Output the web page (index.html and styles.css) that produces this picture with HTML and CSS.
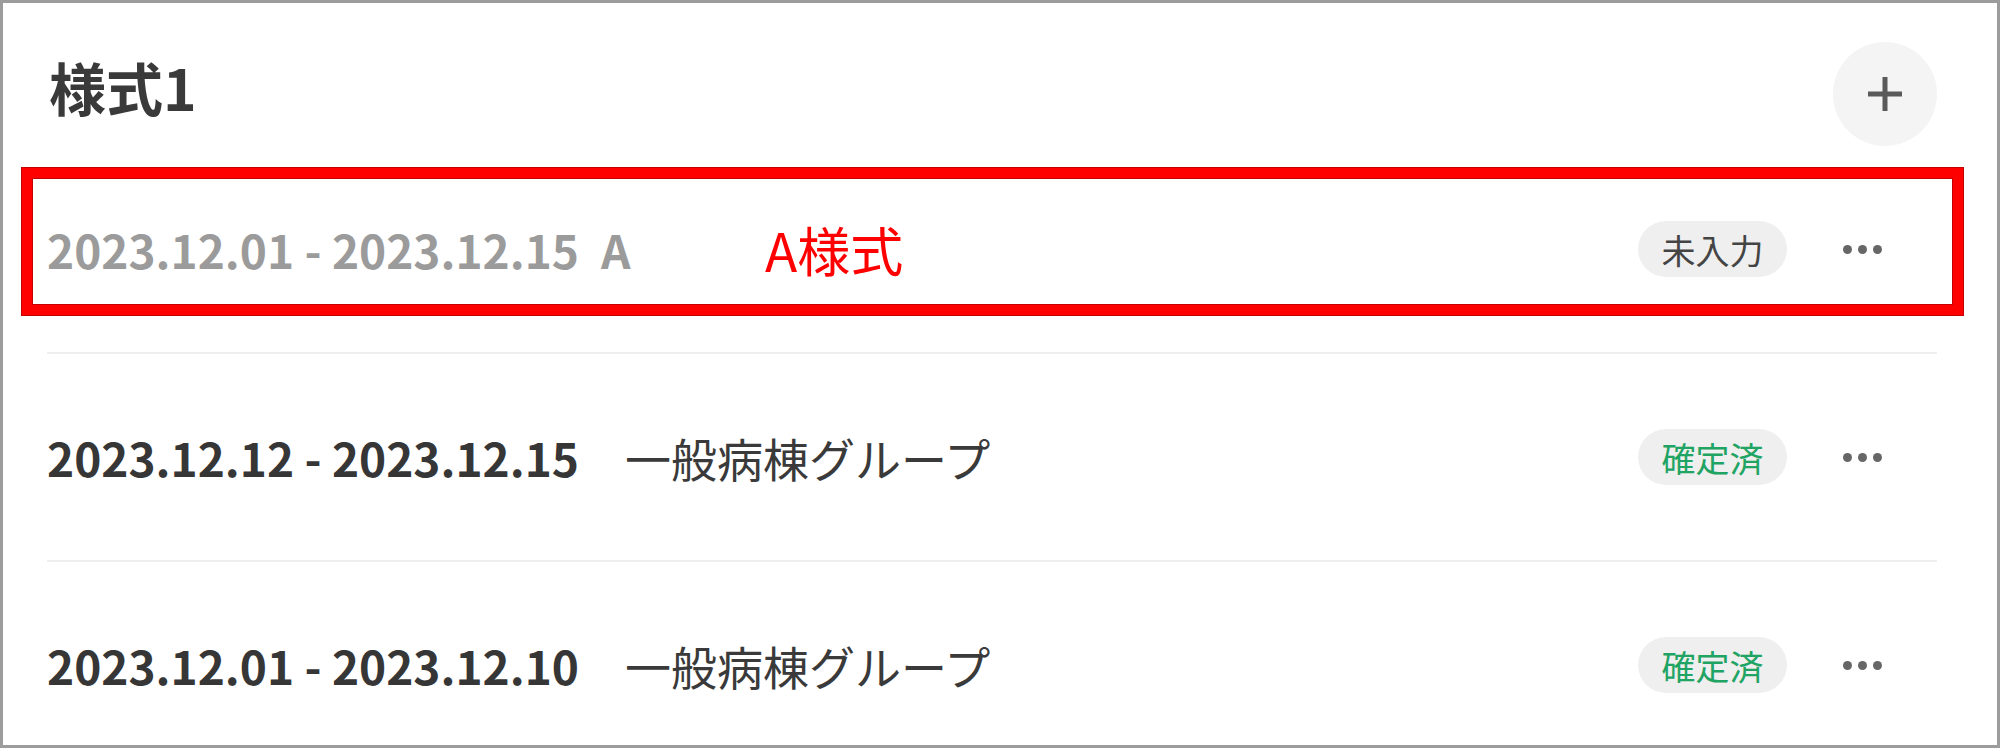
FILE: index.html
```html
<!DOCTYPE html>
<html lang="ja">
<head>
<meta charset="utf-8">
<title>様式1</title>
<link rel="stylesheet" href="styles.css">
</head>
<body>
<div class="frame">
  <section class="panel">
    <header class="panel-head">
      <h1 class="panel-title">様式1</h1>
      <button class="add-btn" aria-label="追加">
        <svg width="36" height="36" viewBox="0 0 36 36"><path d="M18 1v34M1 18h34" stroke="#5a5a5a" stroke-width="5" fill="none"/></svg>
      </button>
    </header>
    <ul class="list">
      <li class="row row-draft">
        <span class="period">2023.12.01 - 2023.12.15</span>
        <span class="name name-draft">A</span>
        <span class="spacer"></span>
        <span class="badge">未入力</span>
        <button class="menu-btn" aria-label="メニュー"><i></i><i></i><i></i></button>
      </li>
      <li class="row">
        <span class="period">2023.12.12 - 2023.12.15</span>
        <span class="name">一般病棟グループ</span>
        <span class="spacer"></span>
        <span class="badge badge-done">確定済</span>
        <button class="menu-btn" aria-label="メニュー"><i></i><i></i><i></i></button>
      </li>
      <li class="row">
        <span class="period">2023.12.01 - 2023.12.10</span>
        <span class="name">一般病棟グループ</span>
        <span class="spacer"></span>
        <span class="badge badge-done">確定済</span>
        <button class="menu-btn" aria-label="メニュー"><i></i><i></i><i></i></button>
      </li>
    </ul>
  </section>
  <div class="annot-box"></div>
  <div class="annot-text">A様式</div>
</div>
</body>
</html>
```

FILE: styles.css
```css
html, body {
  margin: 0;
  padding: 0;
  background: #ffffff;
}
body {
  font-family: "Noto Sans CJK JP", "Noto Sans", sans-serif;
  color: #333333;
}
.frame {
  position: relative;
  box-sizing: border-box;
  width: 2000px;
  height: 748px;
  border: 3px solid #9c9c9c;
  overflow: hidden;
  background: #ffffff;
}
.panel {
  padding: 0 60px 0 44px;
}
.panel-head {
  display: flex;
  align-items: center;
  justify-content: space-between;
  padding-top: 39px;
  height: 104px;
}
.panel-title {
  margin: 0 0 16px 2px;
  font-size: 57px;
  font-weight: 700;
  color: #3a3a3a;
  line-height: 1;
}
.add-btn {
  width: 104px;
  height: 104px;
  border-radius: 50%;
  border: none;
  background: #f4f4f4;
  display: flex;
  align-items: center;
  justify-content: center;
  padding: 0;
}
.add-btn svg {
  display: block;
}
.list {
  list-style: none;
  margin: 0;
  padding: 0;
}
.row {
  display: flex;
  align-items: center;
  height: 206px;
  border-bottom: 2px solid #eeeeee;
}
.period {
  font-size: 46px;
  font-weight: 700;
  color: #363636;
  white-space: nowrap;
}
.name {
  margin-left: 46px;
  font-size: 46px;
  font-weight: 400;
  color: #3a3a3a;
  white-space: nowrap;
}
.row-draft .period,
.name-draft {
  color: #9b9b9b;
}
.name-draft {
  margin-left: 22px;
  font-size: 46px;
  font-weight: 700;
}
.spacer {
  flex: 1;
}
.badge {
  display: inline-flex;
  align-items: center;
  justify-content: center;
  box-sizing: border-box;
  width: 149px;
  height: 56px;
  border-radius: 28px;
  background: #efefef;
  font-size: 34px;
  color: #444444;
}
.badge-done {
  color: #1fa463;
}
.menu-btn {
  width: 80px;
  height: 56px;
  margin: 0 35px;
  border: none;
  background: transparent;
  padding: 0;
  display: flex;
  align-items: center;
  justify-content: center;
  gap: 6px;
}
.menu-btn i {
  display: block;
  width: 9px;
  height: 9px;
  border-radius: 50%;
  background: #666666;
}
.annot-box {
  position: absolute;
  left: 19px;
  top: 165px;
  width: 1941px;
  height: 147px;
  box-sizing: border-box;
  border: 10px solid #ff0000;
  box-shadow: 0 0 0 1px #c40000, inset 0 0 0 1px #c40000;
}
.annot-text {
  position: absolute;
  left: 762px;
  top: 215px;
  font-size: 53px;
  line-height: 1.2;
  color: #ff0000;
  font-family: "Noto Sans CJK JP", "Noto Sans", sans-serif;
}
```
